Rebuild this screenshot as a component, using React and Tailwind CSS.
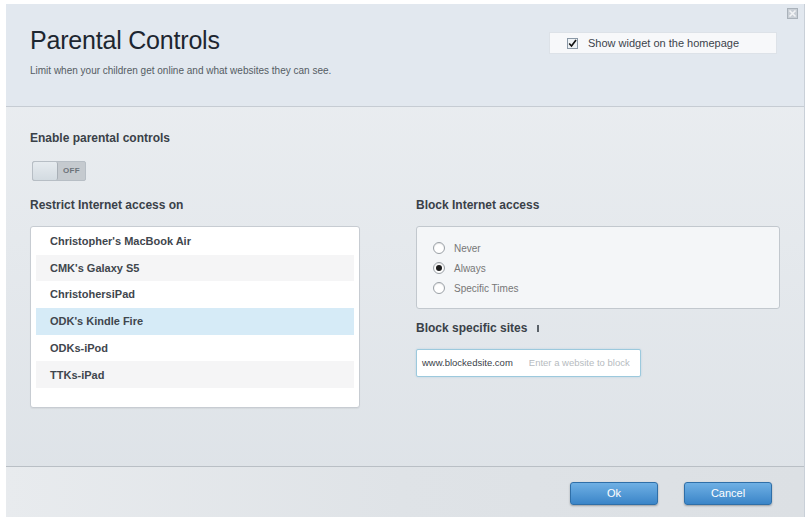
const devices = [
  { name: "Christopher's MacBook Air" },
  { name: "CMK's Galaxy S5", shade: true },
  { name: "ChristohersiPad" },
  { name: "ODK's Kindle Fire", selected: true },
  { name: "ODKs-iPod" },
  { name: "TTKs-iPad", shade: true },
];

function Radio({ checked, label }) {
  return (
    <div className="flex items-center gap-[9px] h-[20px]">
      <span className="w-[12px] h-[12px] rounded-full border border-[#9aa0a6] bg-white flex items-center justify-center shadow-[inset_0_1px_1px_rgba(0,0,0,0.1)]">
        {checked && <span className="w-[6px] h-[6px] rounded-full bg-[#1c1c1c]" />}
      </span>
      <span className="text-[10px] text-[#777]">{label}</span>
    </div>
  );
}

export default function App() {
  return (
    <div
      className="w-[809px] h-[523px] bg-white pt-[4px] pl-[6px] pr-[4px] pb-[6px]"
      style={{ fontFamily: '"Liberation Sans", Arial, sans-serif' }}
    >
      <div className="w-full h-full flex flex-col border-r border-[#c9d0d8] bg-gradient-to-b from-[#eceff2] to-[#dde2e7]">
        {/* Header */}
        <div className="relative h-[103px] bg-[#e2e8ef] border-b border-[#c6ccd3] pl-[24px] pt-[21px]">
          <h1 className="text-[25px] leading-[30px] text-[#1d2630] tracking-[-0.2px]">Parental Controls</h1>
          <p className="mt-[8px] text-[10px] text-[#555c63]">
            Limit when your children get online and what websites they can see.
          </p>
          <div className="absolute left-[543px] top-[28px] w-[228px] h-[22px] bg-[#f7f8fa] border border-[#dde2e8] flex items-center pl-[17px] gap-[10px]">
            <span className="w-[11px] h-[11px] border border-[#8a98a6] bg-[#eef2f5] flex items-center justify-center">
              <svg width="11" height="11" viewBox="0 0 11 11">
                <path d="M1.5 5.5 L4.3 8.6 L9.8 1.2" stroke="#111" strokeWidth="2" fill="none" />
              </svg>
            </span>
            <span className="text-[11px] text-[#3b434b]">Show widget on the homepage</span>
          </div>
          <div className="absolute right-[6px] top-[4px] w-[11px] h-[11px] border border-[#aab2ba] bg-[#c9cfd6] flex items-center justify-center">
            <svg width="9" height="9" viewBox="0 0 9 9">
              <path d="M1.5 1.5 L7.5 7.5 M7.5 1.5 L1.5 7.5" stroke="#f2f4f6" strokeWidth="1.6" />
            </svg>
          </div>
        </div>

        {/* Body */}
        <div className="flex-1 pl-[24px] pt-[22px]">
          <h2 className="text-[12px] font-bold text-[#3a4148]">Enable parental controls</h2>
          <div className="mt-[14px] ml-[2px] flex w-[54px] h-[20px] rounded-[2px] overflow-hidden border border-[#b7bec5] bg-[#c5cacf]">
            <span className="w-[25px] h-full rounded-[2px] bg-gradient-to-b from-[#e6ebef] to-[#d3dbe1] border-r border-[#a9b0b7]" />
            <span className="flex-1 flex items-center justify-center text-[8px] font-bold text-[#6c737a] tracking-[0.3px]">OFF</span>
          </div>

          <div className="mt-[15px] flex gap-[56px]">
            <div className="w-[330px]">
              <h2 className="text-[12px] font-bold text-[#3a4148]">Restrict Internet access on</h2>
              <div className="mt-[12px] h-[182px] bg-white border border-[#c7ccd2] rounded-[3px] px-[5px] pt-[1px] shadow-[0_1px_1px_rgba(0,0,0,0.05)]">
                {devices.map((d) => (
                  <div
                    key={d.name}
                    className={`h-[26.7px] flex items-center pl-[14px] text-[11px] font-bold text-[#3f464d] ${
                      d.selected ? "bg-[#d6ebf7]" : d.shade ? "bg-[#f5f5f6]" : ""
                    }`}
                  >
                    {d.name}
                  </div>
                ))}
              </div>
            </div>

            <div className="w-[364px]">
              <h2 className="text-[12px] font-bold text-[#3a4148]">Block Internet access</h2>
              <div className="mt-[12px] h-[83px] bg-[#f4f6f8] border border-[#c2c8ce] rounded-[3px] pl-[16px] pt-[11px]">
                <Radio label="Never" />
                <Radio label="Always" checked />
                <Radio label="Specific Times" />
              </div>
              <h2 className="mt-[10px] text-[12px] font-bold text-[#3a4148] flex items-center gap-[10px]">
                Block specific sites
                <span className="w-[2px] h-[7px] bg-[#5a6168]" />
              </h2>
              <div className="mt-[12px] w-[225px] h-[28px] bg-white border border-[#9cc9dd] rounded-[2px] flex items-center pl-[5px] gap-[16px] shadow-[0_0_2px_rgba(120,180,210,0.4)]">
                <span className="text-[9.5px] text-[#3a4148]">www.blockedsite.com</span>
                <span className="text-[9.5px] text-[#b6bbc0] whitespace-nowrap overflow-hidden">Enter a website to block</span>
              </div>
            </div>
          </div>
        </div>

        {/* Footer */}
        <div className="h-[51px] border-t border-[#b9bfc5] bg-gradient-to-r from-[#e8ebee] via-[#dfe3e7] to-[#dce0e4] flex items-center justify-end pr-[32px] gap-[26px] pt-[2px]">
          <button className="w-[88px] h-[23px] rounded-[3px] bg-gradient-to-b from-[#6fb0e4] to-[#3a85c8] border border-[#2f6fa8] text-white text-[11px] shadow-[0_1px_2px_rgba(0,0,0,0.3)]">
            Ok
          </button>
          <button className="w-[88px] h-[23px] rounded-[3px] bg-gradient-to-b from-[#6fb0e4] to-[#3a85c8] border border-[#2f6fa8] text-white text-[11px] shadow-[0_1px_2px_rgba(0,0,0,0.3)]">
            Cancel
          </button>
        </div>
      </div>
    </div>
  );
}
